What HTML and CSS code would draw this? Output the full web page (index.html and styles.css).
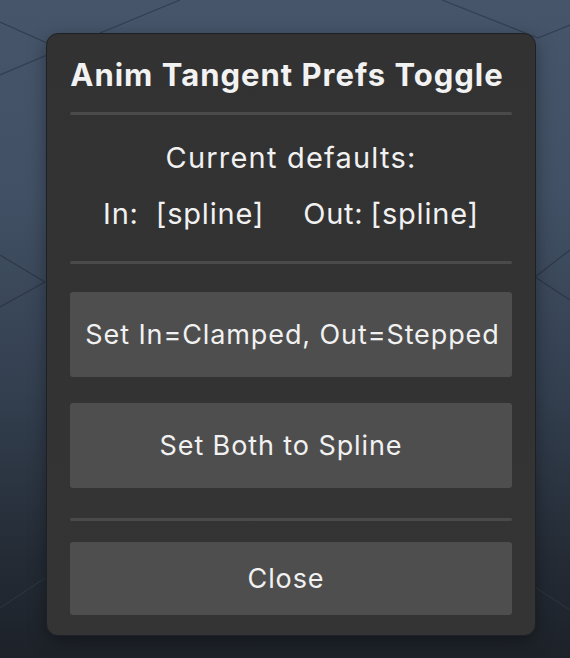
FILE: index.html
```html
<!DOCTYPE html>
<html>
<head>
<meta charset="utf-8">
<link rel="stylesheet" href="styles.css">
</head>
<body>
<svg class="backdrop" width="570" height="658" viewBox="0 0 570 658">
  <g class="dark-lines">
    <line x1="0" y1="22" x2="47" y2="43"/>
    <line x1="0" y1="75" x2="47" y2="55"/>
    <line x1="180" y1="0" x2="100" y2="33"/>
    <line x1="442" y1="0" x2="538" y2="38"/>
    <line x1="570" y1="25" x2="538" y2="38"/>
    <line x1="0" y1="255" x2="45" y2="282"/>
    <line x1="0" y1="307" x2="45" y2="282"/>
    <line x1="570" y1="250" x2="535" y2="277"/>
    <line x1="570" y1="300" x2="535" y2="277"/>
  </g>
  <g class="light-lines">
    <line x1="0" y1="608" x2="45" y2="578"/>
    <line x1="535" y1="587" x2="570" y2="610"/>
  </g>
</svg>
<main class="dialog">
  <h1 class="title">Anim Tangent Prefs Toggle</h1>
  <div class="sep sep-top"></div>
  <p class="label">Current defaults:</p>
  <p class="values"><span class="k-in">In:</span><span class="v-in">[spline]</span><span class="k-out">Out:</span><span>[spline]</span></p>
  <div class="sep sep-mid"></div>
  <button class="btn btn-big btn-first">Set In=Clamped, Out=Stepped</button>
  <button class="btn btn-big btn-second">Set Both to Spline</button>
  <div class="sep sep-bottom"></div>
  <button class="btn btn-close">Close</button>
</main>
</body>
</html>
```
FILE: styles.css
```css
html, body {
  margin: 0;
  padding: 0;
}
body {
  width: 570px;
  height: 658px;
  overflow: hidden;
  position: relative;
  background: linear-gradient(180deg, #46556a 0%, #415064 30%, #333f4f 60%, #242b35 85%, #1d2229 100%);
  font-family: Inter, "Noto Sans", sans-serif;
  color: #f1f1f1;
  display: flex;
  justify-content: flex-start;
  align-items: flex-start;
}
.backdrop {
  position: absolute;
  left: 0;
  top: 0;
}
.dark-lines line {
  stroke: rgba(28, 36, 48, 0.45);
  stroke-width: 1.2;
}
.light-lines line {
  stroke: rgba(255, 255, 255, 0.05);
  stroke-width: 1.2;
}
.dialog {
  position: relative;
  margin: 33px 0 0 46px;
  width: 490px;
  box-sizing: border-box;
  padding: 24px 23px 20px;
  background: linear-gradient(180deg, #323232 0%, #343434 100%);
  border: 1px solid #1d2024;
  border-radius: 12px;
  box-shadow: 0 6px 18px rgba(0, 0, 0, 0.35);
  display: flex;
  flex-direction: column;
  align-items: stretch;
}
.title {
  margin: 0;
  padding-right: 8px;
  font-size: 31px;
  letter-spacing: 1px;
  line-height: 34px;
  font-weight: 700;
  text-align: center;
  color: #f2f2f2;
}
.sep {
  height: 3px;
  border-radius: 2px;
  background: #4a4a4a;
}
.sep-top { margin-top: 20px; }
.label {
  margin: 26px 0 0;
  font-size: 29px;
  letter-spacing: 1.2px;
  line-height: 34px;
  text-align: center;
}
.values {
  margin: 22px 0 0;
  font-size: 29px;
  letter-spacing: 0.8px;
  line-height: 34px;
  display: flex;
  justify-content: center;
}
.k-in { margin-right: 17px; }
.v-in { margin-right: 39px; }
.k-out { margin-right: 7px; }
.sep-mid { margin-top: 30px; }
.btn {
  font-family: inherit;
  color: #f1f1f1;
  background: #4e4e4e;
  border: none;
  border-radius: 3px;
  font-size: 27px;
  letter-spacing: 0.9px;
  padding: 0;
  text-align: center;
}
.btn-big { height: 85px; }
.btn-first { margin-top: 28px; padding-left: 3px; }
.btn-second { margin-top: 26px; padding-right: 20px; }
.sep-bottom { margin-top: 30px; }
.btn-close {
  margin-top: 21px;
  height: 73px;
  padding-right: 10px;
}
```
